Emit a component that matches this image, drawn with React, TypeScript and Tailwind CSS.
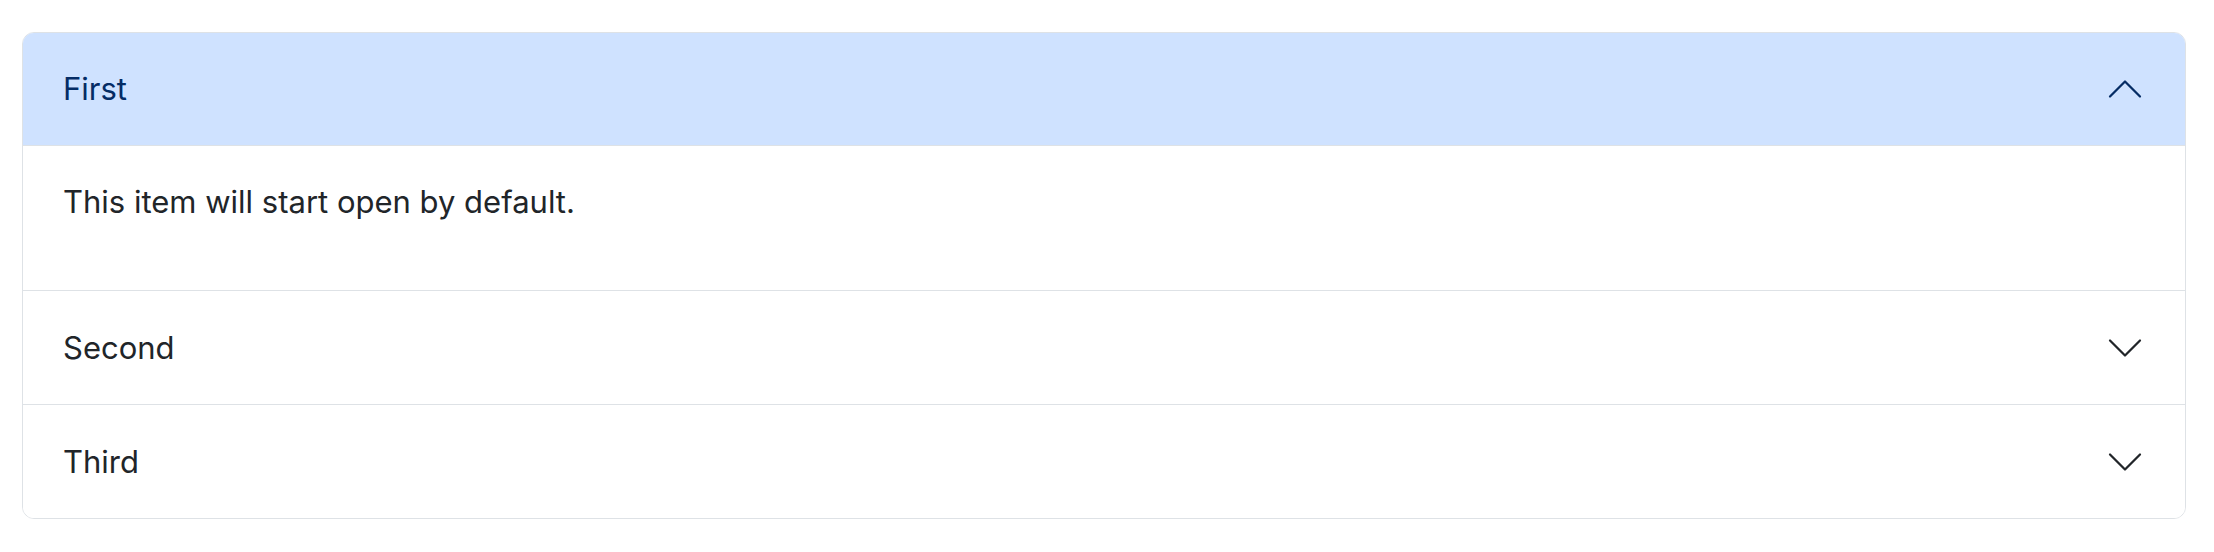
import { useState } from "react";

const items = [
  { id: "first", title: "First", body: "This item will start open by default." },
  { id: "second", title: "Second", body: "This is the second item." },
  { id: "third", title: "Third", body: "This is the third item." },
];

function Chevron({ open }: { open: boolean }) {
  return (
    <svg
      viewBox="0 0 16 16"
      fill="none"
      strokeLinecap="round"
      strokeLinejoin="round"
      className={`w-[40px] h-[40px] shrink-0 ${open ? "rotate-180 stroke-[#052c65]" : "stroke-[#212529]"}`}
    >
      <path d="M2 5L8 11L14 5" strokeWidth="0.9" />
    </svg>
  );
}

export default function App() {
  const [openId, setOpenId] = useState<string | null>("first");

  return (
    <div className="pt-[32px] pl-[22px] bg-white min-h-screen" style={{ fontFamily: "Inter, 'Noto Sans', sans-serif" }}>
      <div className="w-[2164px] border border-[#dee2e6] rounded-[12px] overflow-hidden">
        {items.map((item, i) => {
          const open = openId === item.id;
          return (
            <div key={item.id} className={i > 0 ? "border-t border-[#dee2e6]" : ""}>
              <button
                onClick={() => setOpenId(open ? null : item.id)}
                className={`w-full flex items-center justify-between px-[40px] text-left text-[31px] leading-[48px] ${
                  open
                    ? "h-[113px] bg-[#cfe2ff] text-[#052c65] border-b border-[#dee2e6]"
                    : "h-[113px] bg-white text-[#212529]"
                }`}
              >
                <span>{item.title}</span>
                <Chevron open={open} />
              </button>
              {open && (
                <div className="px-[40px] pt-[32px] pb-[32px] text-[31px] leading-[48px] text-[#212529]">
                  <p className="mb-[32px]">{item.body}</p>
                </div>
              )}
            </div>
          );
        })}
      </div>
    </div>
  );
}
